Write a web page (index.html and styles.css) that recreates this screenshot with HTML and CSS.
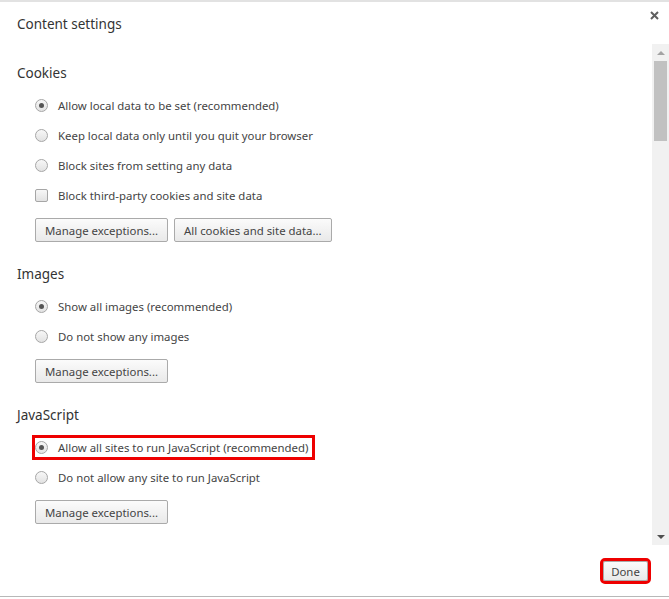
FILE: index.html
```html
<!DOCTYPE html>
<html lang="en">
<head>
    <meta charset="UTF-8">
    <meta name="viewport" content="width=device-width, initial-scale=1.0">
    <title>Content settings</title>
    <link rel="stylesheet" href="styles.css">
</head>
<body>

    <div class="backdrop-strip"></div>

    <div class="dialog">
        <div class="dialog-header">
            <h1>Content settings</h1>
            <button class="close-button" title="Close">
                <svg width="9" height="9" viewBox="0 0 9 9"><path d="M1 1L8 8M8 1L1 8" stroke="#5f5f5f" stroke-width="2"/></svg>
            </button>
        </div>

        <div class="dialog-body">
            <div class="content">
                <section class="group">
                    <h2>Cookies</h2>
                    <label class="option"><span class="radio checked"></span> Allow local data to be set (recommended)</label>
                    <label class="option"><span class="radio"></span> Keep local data only until you quit your browser</label>
                    <label class="option"><span class="radio"></span> Block sites from setting any data</label>
                    <label class="option"><span class="checkbox"></span> Block third-party cookies and site data</label>
                    <div class="button-row">
                        <button class="small-button">Manage exceptions...</button>
                        <button class="small-button">All cookies and site data...</button>
                    </div>
                </section>

                <section class="group">
                    <h2>Images</h2>
                    <label class="option"><span class="radio checked"></span> Show all images (recommended)</label>
                    <label class="option"><span class="radio"></span> Do not show any images</label>
                    <div class="button-row">
                        <button class="small-button">Manage exceptions...</button>
                    </div>
                </section>

                <section class="group">
                    <h2>JavaScript</h2>
                    <label class="option"><span class="highlight"><span class="radio checked"></span> Allow all sites to run JavaScript (recommended)</span></label>
                    <label class="option"><span class="radio"></span> Do not allow any site to run JavaScript</label>
                    <div class="button-row">
                        <button class="small-button">Manage exceptions...</button>
                    </div>
                </section>
            </div>

            <div class="scrollbar">
                <div class="arrow arrow-up"></div>
                <div class="track">
                    <div class="thumb"></div>
                </div>
                <div class="arrow arrow-down"></div>
            </div>
        </div>

        <div class="dialog-footer">
            <button class="small-button done-button">Done</button>
        </div>
    </div>

</body>
</html>
```

FILE: styles.css
```css
body {
    margin: 0;
    height: 599px;
    overflow: hidden;
    background: #ffffff;
    font-family: "Noto Sans", "Open Sans", Arial, sans-serif;
    font-size: 11.4px;
    color: #444444;
}
.backdrop-strip {
    height: 2px;
    background: #e2e2e2;
}
.dialog {
    height: 594px;
    background: #ffffff;
    border-radius: 4px 4px 0 0;
    border-bottom: 1px solid #b8b8b8;
    display: flex;
    flex-direction: column;
}
.dialog-header {
    height: 42px;
    display: flex;
    justify-content: space-between;
    align-items: flex-start;
}
.dialog-header h1 {
    margin: 12px 0 0 17px;
    font-size: 13.5px;
    font-weight: normal;
    line-height: 20px;
    color: #333333;
}
.close-button {
    margin: 9px 10px 0 0;
    padding: 0;
    width: 9px;
    height: 9px;
    border: none;
    background: none;
    display: flex;
    cursor: pointer;
}
.dialog-body {
    height: 501px;
    display: flex;
}
.content {
    flex: 1;
    overflow: hidden;
    padding: 19px 0 0 17px;
}
.group h2 {
    margin: 0 0 7px 0;
    font-size: 13.5px;
    font-weight: normal;
    line-height: 20px;
    color: #333333;
}
.group {
    margin-bottom: 22px;
}
.option {
    display: flex;
    align-items: center;
    height: 30px;
    padding-left: 18px;
    gap: 10px;
}
.radio, .checkbox {
    flex: none;
    width: 13px;
    height: 13px;
    border: 1px solid #a6a6a6;
    background: linear-gradient(#f7f7f7, #e2e2e2);
    box-sizing: border-box;
    position: relative;
}
.radio {
    border-radius: 50%;
}
.checkbox {
    border-radius: 2px;
}
.radio.checked::after {
    content: "";
    position: absolute;
    left: 3px;
    top: 3px;
    width: 5px;
    height: 5px;
    border-radius: 50%;
    background: #555555;
}
.highlight {
    display: inline-flex;
    align-items: center;
    gap: 10px;
    height: 19px;
    padding-right: 4px;
    outline: 3px solid #ee0000;
}
.button-row {
    display: flex;
    gap: 6px;
    padding: 8px 0 0 18px;
}
.small-button {
    height: 24px;
    padding: 0 9px;
    font-family: inherit;
    font-size: 11.4px;
    color: #444444;
    background: linear-gradient(#fbfbfb, #e9e9e9);
    border: 1px solid #aaaaaa;
    border-radius: 2px;
    cursor: pointer;
}
.scrollbar {
    width: 17px;
    background: #f1f1f1;
    display: flex;
    flex-direction: column;
}
.arrow {
    height: 17px;
    display: flex;
    align-items: center;
    justify-content: center;
}
.arrow::before {
    content: "";
    border-left: 4px solid transparent;
    border-right: 4px solid transparent;
}
.arrow-up::before {
    border-bottom: 4px solid #a3a3a3;
}
.arrow-down::before {
    border-top: 4px solid #505050;
}
.track {
    flex: 1;
    padding: 0 2px;
}
.thumb {
    height: 80px;
    background: #c1c1c1;
}
.dialog-footer {
    flex: 1;
    display: flex;
    justify-content: flex-end;
    align-items: flex-start;
    padding: 16px 21px 0 0;
}
.done-button {
    height: 20px;
    width: 45px;
    padding: 0;
    outline: 3px solid #ee0000;
}
```
